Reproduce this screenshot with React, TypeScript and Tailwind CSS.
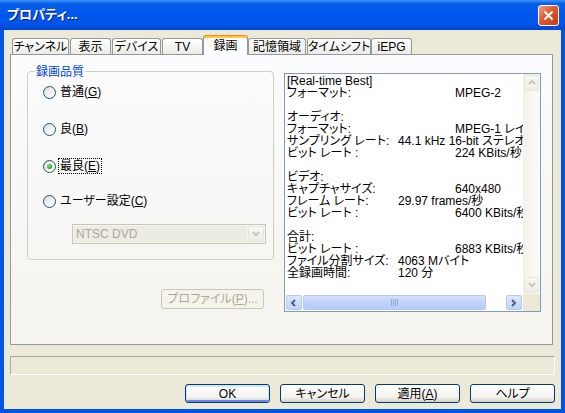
import React from 'react';

const FONT = "font-['Liberation_Sans','Noto_Sans_CJK_JP',sans-serif] [font-feature-settings:'palt']";

const tabs = [
  { label: 'チャンネル', w: 'w-[57px]', ml: 'ml-0' },
  { label: '表示', w: 'w-[41px]', ml: 'ml-[1px]' },
  { label: 'デバイス', w: 'w-[49px]', ml: 'ml-[1px]' },
  { label: 'TV', w: 'w-[41px]', ml: 'ml-[1px]' },
  { label: '録画', w: 'w-[45px]', ml: 'ml-0', active: true },
  { label: '記憶領域', w: 'w-[58px]', ml: 'ml-0' },
  { label: 'タイムシフト', w: 'w-[64px]', ml: 'ml-[1px]' },
  { label: 'iEPG', w: 'w-[41px]', ml: 'ml-0' },
];

// label, value, column (1 = x398, 2 = x455)
const lines: [string, string, number][] = [
  ['[Real-time Best]', '', 0],
  ['フォーマット:', 'MPEG-2', 2],
  ['', '', 0],
  ['オーディオ:', '', 0],
  ['フォーマット:', 'MPEG-1 レイヤー2', 2],
  ['サンプリング レート:', '44.1 kHz 16-bit ステレオ', 1],
  ['ビット レート :', '224 KBits/秒', 2],
  ['', '', 0],
  ['ビデオ:', '', 0],
  ['キャプチャサイズ:', '640x480', 2],
  ['フレーム レート:', '29.97 frames/秒', 1],
  ['ビット レート :', '6400 KBits/秒', 2],
  ['', '', 0],
  ['合計:', '', 0],
  ['ビット レート :', '6883 KBits/秒', 2],
  ['ファイル分割サイズ:', '4063 Mバイト', 1],
  ['全録画時間:', '120 分', 1],
];

function Radio({ checked, children, focus }: { checked?: boolean; children: React.ReactNode; focus?: boolean }) {
  return (
    <div className="flex h-[16px] items-center">
      <div className="flex h-[13px] w-[13px] items-center justify-center rounded-full border border-[#1c5180] bg-[linear-gradient(135deg,#dcd9d0,#f6f6f3_60%,#ffffff)]">
        {checked && (
          <div className="h-[5px] w-[5px] rounded-full bg-[radial-gradient(circle_at_35%_35%,#7be37b,#21a121_70%)]" />
        )}
      </div>
      <span
        className={`ml-[2px] px-[1px] leading-[14px] ${focus ? 'border border-dotted border-black' : 'border border-transparent'}`}
      >
        {children}
      </span>
    </div>
  );
}

function Chevron({ dir, color }: { dir: 'up' | 'down' | 'left' | 'right'; color: string }) {
  const d = {
    up: 'M1 5 L4 2 L7 5',
    down: 'M1 2 L4 5 L7 2',
    left: 'M5 1 L2 4 L5 7',
    right: 'M2 1 L5 4 L2 7',
  }[dir];
  return (
    <svg width="8" height="8" viewBox="0 0 8 8">
      <path d={d} fill="none" stroke={color} strokeWidth="2" />
    </svg>
  );
}

export default function App() {
  return (
    <div className={`flex h-[413px] w-[565px] flex-col bg-[#0054e3] text-[12px] text-black ${FONT}`}>
      {/* Title bar */}
      <div className="flex h-[30px] shrink-0 items-center bg-[linear-gradient(180deg,#3d95ff_0%,#0a5fe8_12%,#0058ee_45%,#0055e8_80%,#0046d5_100%)] pl-[7px] pr-[6px]">
        <span className="text-[13px] font-bold text-white [text-shadow:1px_1px_#0a1883]">プロパティ...</span>
        <div className="ml-auto flex h-[21px] w-[21px] items-center justify-center rounded-[3px] border border-white bg-[linear-gradient(135deg,#f0a187,#e0582f_45%,#c43b12)]">
          <svg width="11" height="11" viewBox="0 0 11 11">
            <path d="M1.5 1.5 L9.5 9.5 M9.5 1.5 L1.5 9.5" stroke="#ffffff" strokeWidth="2" />
          </svg>
        </div>
      </div>

      {/* Client area */}
      <div className="mx-[4px] mb-[4px] flex flex-1 flex-col bg-[#ece9d8] pt-[5px]">
        {/* Tabs */}
        <div className="flex h-[19px] items-end whitespace-nowrap pl-[8px]">
          {tabs.map((t) =>
            t.active ? (
              <div
                key={t.label}
                className={`relative z-10 -mb-[1px] flex h-[20px] ${t.w} ${t.ml} items-center justify-center rounded-t-[3px] border-x border-t border-x-[#919b9c] border-t-[#e68b2c] bg-[#fcfcfe] pt-[1px] shadow-[inset_0_2px_0_#ffc83c]`}
              >
                {t.label}
              </div>
            ) : (
              <div
                key={t.label}
                className={`flex h-[16px] ${t.w} ${t.ml} items-center justify-center overflow-hidden rounded-t-[3px] border-x border-t border-[#919b9c] bg-[linear-gradient(180deg,#ffffff,#f3f3ef_60%,#ecebe6)] pt-[1px]`}
              >
                {t.label}
              </div>
            ),
          )}
        </div>

        {/* Tab page */}
        <div className="ml-[6px] flex h-[291px] w-[543px] border border-[#919b9c] bg-[linear-gradient(180deg,#fcfcfe,#f4f3ee)] pl-[16px] pt-[16px]">
          {/* Left column */}
          <div className="flex w-[247px] flex-col">
            <div className="relative h-[189px] rounded-[4px] border border-[#d0d0bf] pl-[15px] pt-[12px]">
              <span className="absolute left-[7px] top-[-9px] bg-[#fbfbfc] px-[1px] text-[#0046d5]">録画品質</span>
              <div className="flex flex-col">
                <Radio>
                  普通(<span className="underline">G</span>)
                </Radio>
                <div className="mt-[21px]">
                  <Radio>
                    良(<span className="underline">B</span>)
                  </Radio>
                </div>
                <div className="mt-[21px]">
                  <Radio checked focus>
                    最良(<span className="underline">E</span>)
                  </Radio>
                </div>
                <div className="mt-[19px]">
                  <Radio>
                    ユーザー設定(<span className="underline">C</span>)
                  </Radio>
                </div>
                <div className="ml-[29px] mt-[15px] flex h-[20px] w-[194px] items-stretch border border-[#c9c7ba] bg-[#f5f4ea] p-[1px]">
                  <div className="flex flex-1 items-center bg-[#ecebe4] pl-[2px] text-[#aca899]">NTSC DVD</div>
                  <div className="ml-[1px] flex w-[16px] items-center justify-center rounded-[2px] border border-[#e8e6da] bg-[linear-gradient(180deg,#f7f7f3,#eeede5)]">
                    <Chevron dir="down" color="#c9c7ba" />
                  </div>
                </div>
              </div>
            </div>
            <div className="ml-[134px] mt-[29px] flex h-[20px] w-[103px] items-center justify-center rounded-[3px] border border-[#c9c7ba] bg-[#f5f4ea] text-[#aca899]">
              プロファイル(<span className="underline">P</span>)...
            </div>
          </div>

          {/* Info text box */}
          <div className="ml-[10px] mt-[2px] flex h-[239px] w-[257px] shrink-0 overflow-hidden border border-[#7f9db9] bg-white">
            <div className="flex min-w-0 flex-1 flex-col">
              <div className="min-h-0 flex-1 overflow-hidden whitespace-nowrap pl-[2px] pt-[1px] leading-[12px]">
                {lines.map(([label, value, col], i) => (
                  <div key={i} className="flex h-[12px]">
                    {col === 0 ? (
                      <span>{label}</span>
                    ) : (
                      <>
                        <span className={`shrink-0 ${col === 1 ? 'w-[111px]' : 'w-[168px]'}`}>{label}</span>
                        <span className="shrink-0">{value}</span>
                      </>
                    )}
                  </div>
                ))}
              </div>
              {/* Horizontal scrollbar */}
              <div className="flex h-[17px] shrink-0 items-center bg-[#fefefb] px-[1px]">
                <div className="flex h-[15px] w-[16px] items-center justify-center rounded-[2px] border border-[#b4c8f6] bg-[linear-gradient(180deg,#dde7fe,#c1d3fb)]">
                  <Chevron dir="left" color="#4d6185" />
                </div>
                <div className="ml-[1px] flex h-[15px] w-[183px] items-center justify-center rounded-[2px] border border-[#b4c8f6] bg-[linear-gradient(180deg,#d4e0fd,#c1d3fb_50%,#b7cbf8)]">
                  <div className="flex gap-[1px]">
                    <div className="h-[7px] w-[1px] bg-[#8ea9e6]" />
                    <div className="h-[7px] w-[1px] bg-[#8ea9e6]" />
                    <div className="h-[7px] w-[1px] bg-[#8ea9e6]" />
                    <div className="h-[7px] w-[1px] bg-[#8ea9e6]" />
                  </div>
                </div>
                <div className="flex-1" />
                <div className="flex h-[15px] w-[16px] items-center justify-center rounded-[2px] border border-[#b4c8f6] bg-[linear-gradient(180deg,#dde7fe,#c1d3fb)]">
                  <Chevron dir="right" color="#4d6185" />
                </div>
              </div>
            </div>
            {/* Vertical scrollbar (disabled) */}
            <div className="flex w-[17px] shrink-0 flex-col">
              <div className="flex flex-1 flex-col items-center bg-[linear-gradient(90deg,#f3f1ea,#fbfbf8)] py-[1px]">
                <div className="flex h-[16px] w-[15px] items-center justify-center rounded-[2px] border border-[#e8e6da] bg-[linear-gradient(180deg,#f7f7f3,#eeede5)]">
                  <Chevron dir="up" color="#c9c7ba" />
                </div>
                <div className="flex-1" />
                <div className="flex h-[16px] w-[15px] items-center justify-center rounded-[2px] border border-[#e8e6da] bg-[linear-gradient(180deg,#f7f7f3,#eeede5)]">
                  <Chevron dir="down" color="#c9c7ba" />
                </div>
              </div>
              <div className="h-[17px] bg-[#ece9d8]" />
            </div>
          </div>
        </div>

        {/* Status field */}
        <div className="mx-[6px] mt-[11px] h-[19px] border border-b-white border-l-[#aca899] border-r-white border-t-[#aca899]" />

        {/* Buttons */}
        <div className="mt-[9px] flex justify-end gap-[10px] pr-[6px]">
          {[
            { label: <>OK</>, def: true },
            { label: <>キャンセル</> },
            { label: <>適用(<span className="underline">A</span>)</> },
            { label: <>ヘルプ</> },
          ].map((b, i) => (
            <div
              key={i}
              className={`flex h-[19px] w-[85px] items-center justify-center rounded-[3px] border border-[#003c74] bg-[linear-gradient(180deg,#ffffff,#f3f3ef_70%,#d6d0c5)] ${b.def ? 'shadow-[inset_0_1px_0_1px_#cee7ff,inset_0_-1px_0_1px_#6982ee]' : ''}`}
            >
              {b.label}
            </div>
          ))}
        </div>
      </div>
    </div>
  );
}
